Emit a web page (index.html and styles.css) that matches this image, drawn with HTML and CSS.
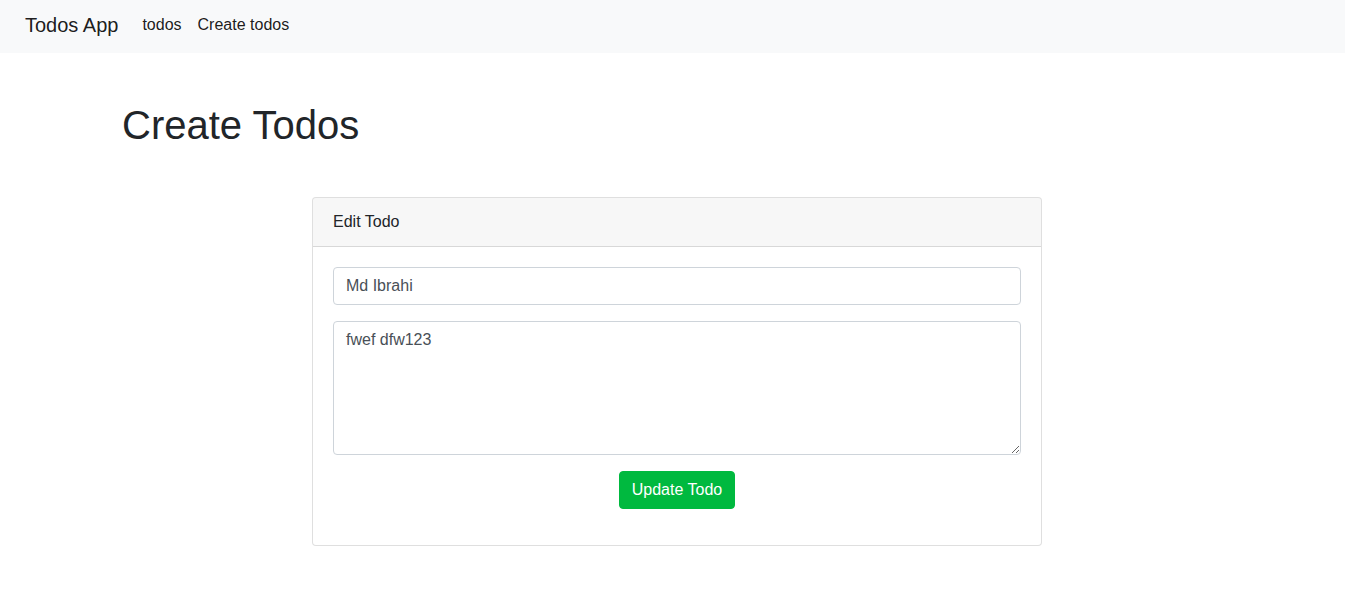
FILE: index.html
```html
<!DOCTYPE html>
<html lang="en">
<head>
<meta charset="utf-8">
<title>Todos App</title>
<link rel="stylesheet" href="styles.css">
</head>
<body>
<nav class="navbar">
  <a class="brand" href="#">Todos App</a>
  <ul class="nav-links">
    <li><a href="#">todos</a></li>
    <li><a href="#">Create todos</a></li>
  </ul>
</nav>
<div class="page">
  <main class="container">
    <h1 class="title">Create Todos</h1>
    <div class="row">
      <div class="col">
        <div class="card">
          <div class="card-header">Edit Todo</div>
          <form class="card-body">
            <input class="form-control" type="text" value="Md Ibrahi">
            <textarea class="form-control textarea">fwef dfw123</textarea>
            <div class="actions">
              <button type="button" class="btn">Update Todo</button>
            </div>
          </form>
        </div>
      </div>
    </div>
  </main>
</div>
</body>
</html>
```

FILE: styles.css
```css
* { box-sizing: border-box; }
html, body { margin: 0; padding: 0; }
body {
  font-family: "Liberation Sans", Arial, sans-serif;
  font-size: 16px;
  line-height: 1.5;
  color: #212529;
  background: #fff;
}
a { text-decoration: none; color: inherit; }

.navbar {
  display: flex;
  align-items: center;
  height: 53px;
  padding: 0 0 4px 25px;
  background: #f8f9fa;
}
.brand {
  font-size: 20px;
  line-height: 30px;
  color: rgba(0,0,0,.9);
  margin-right: 24px;
  margin-top: 1px;
}
.nav-links {
  display: flex;
  list-style: none;
  margin: 0;
  padding: 0;
  gap: 16px;
}
.nav-links a {
  color: rgba(0,0,0,.9);
  font-size: 16px;
  line-height: 24px;
}

.page {
  display: flex;
  justify-content: center;
  padding-left: 9px;
}
.container {
  width: 1140px;
  padding: 0 15px;
}
.title {
  margin: 48px 0 48px;
  font-size: 40px;
  line-height: 1.2;
  font-weight: 400;
}
.row {
  display: flex;
  justify-content: center;
  margin: 0 -15px;
}
.col {
  width: 760px;
  padding: 0 15px;
}
.card {
  border: 1px solid rgba(0,0,0,.125);
  border-radius: 4px;
  background: #fff;
}
.card-header {
  padding: 12px 20px;
  height: 49px;
  background: rgba(0,0,0,.03);
  border-bottom: 1px solid rgba(0,0,0,.125);
  border-radius: 3px 3px 0 0;
  font-size: 16px;
  line-height: 24px;
}
.card-body {
  padding: 20px 20px 20px;
  display: flex;
  flex-direction: column;
  gap: 16px;
}
.form-control {
  display: block;
  width: 100%;
  height: 38px;
  padding: 6px 12px;
  font-family: "Liberation Sans", Arial, sans-serif;
  font-size: 16px;
  line-height: 24px;
  color: #495057;
  background: #fff;
  border: 1px solid #ced4da;
  border-radius: 4px;
  margin: 0;
}
.textarea {
  height: 134px;
  resize: vertical;
  padding-top: 6px;
}
.actions {
  display: flex;
  justify-content: center;
  padding-bottom: 16px;
}
.btn {
  height: 38px;
  padding: 6px 12px;
  white-space: nowrap;
  font-family: "Liberation Sans", Arial, sans-serif;
  font-size: 16px;
  line-height: 24px;
  color: #fff;
  background: #00b93f;
  border: 1px solid #00b93f;
  border-radius: 4px;
  cursor: pointer;
}
```
